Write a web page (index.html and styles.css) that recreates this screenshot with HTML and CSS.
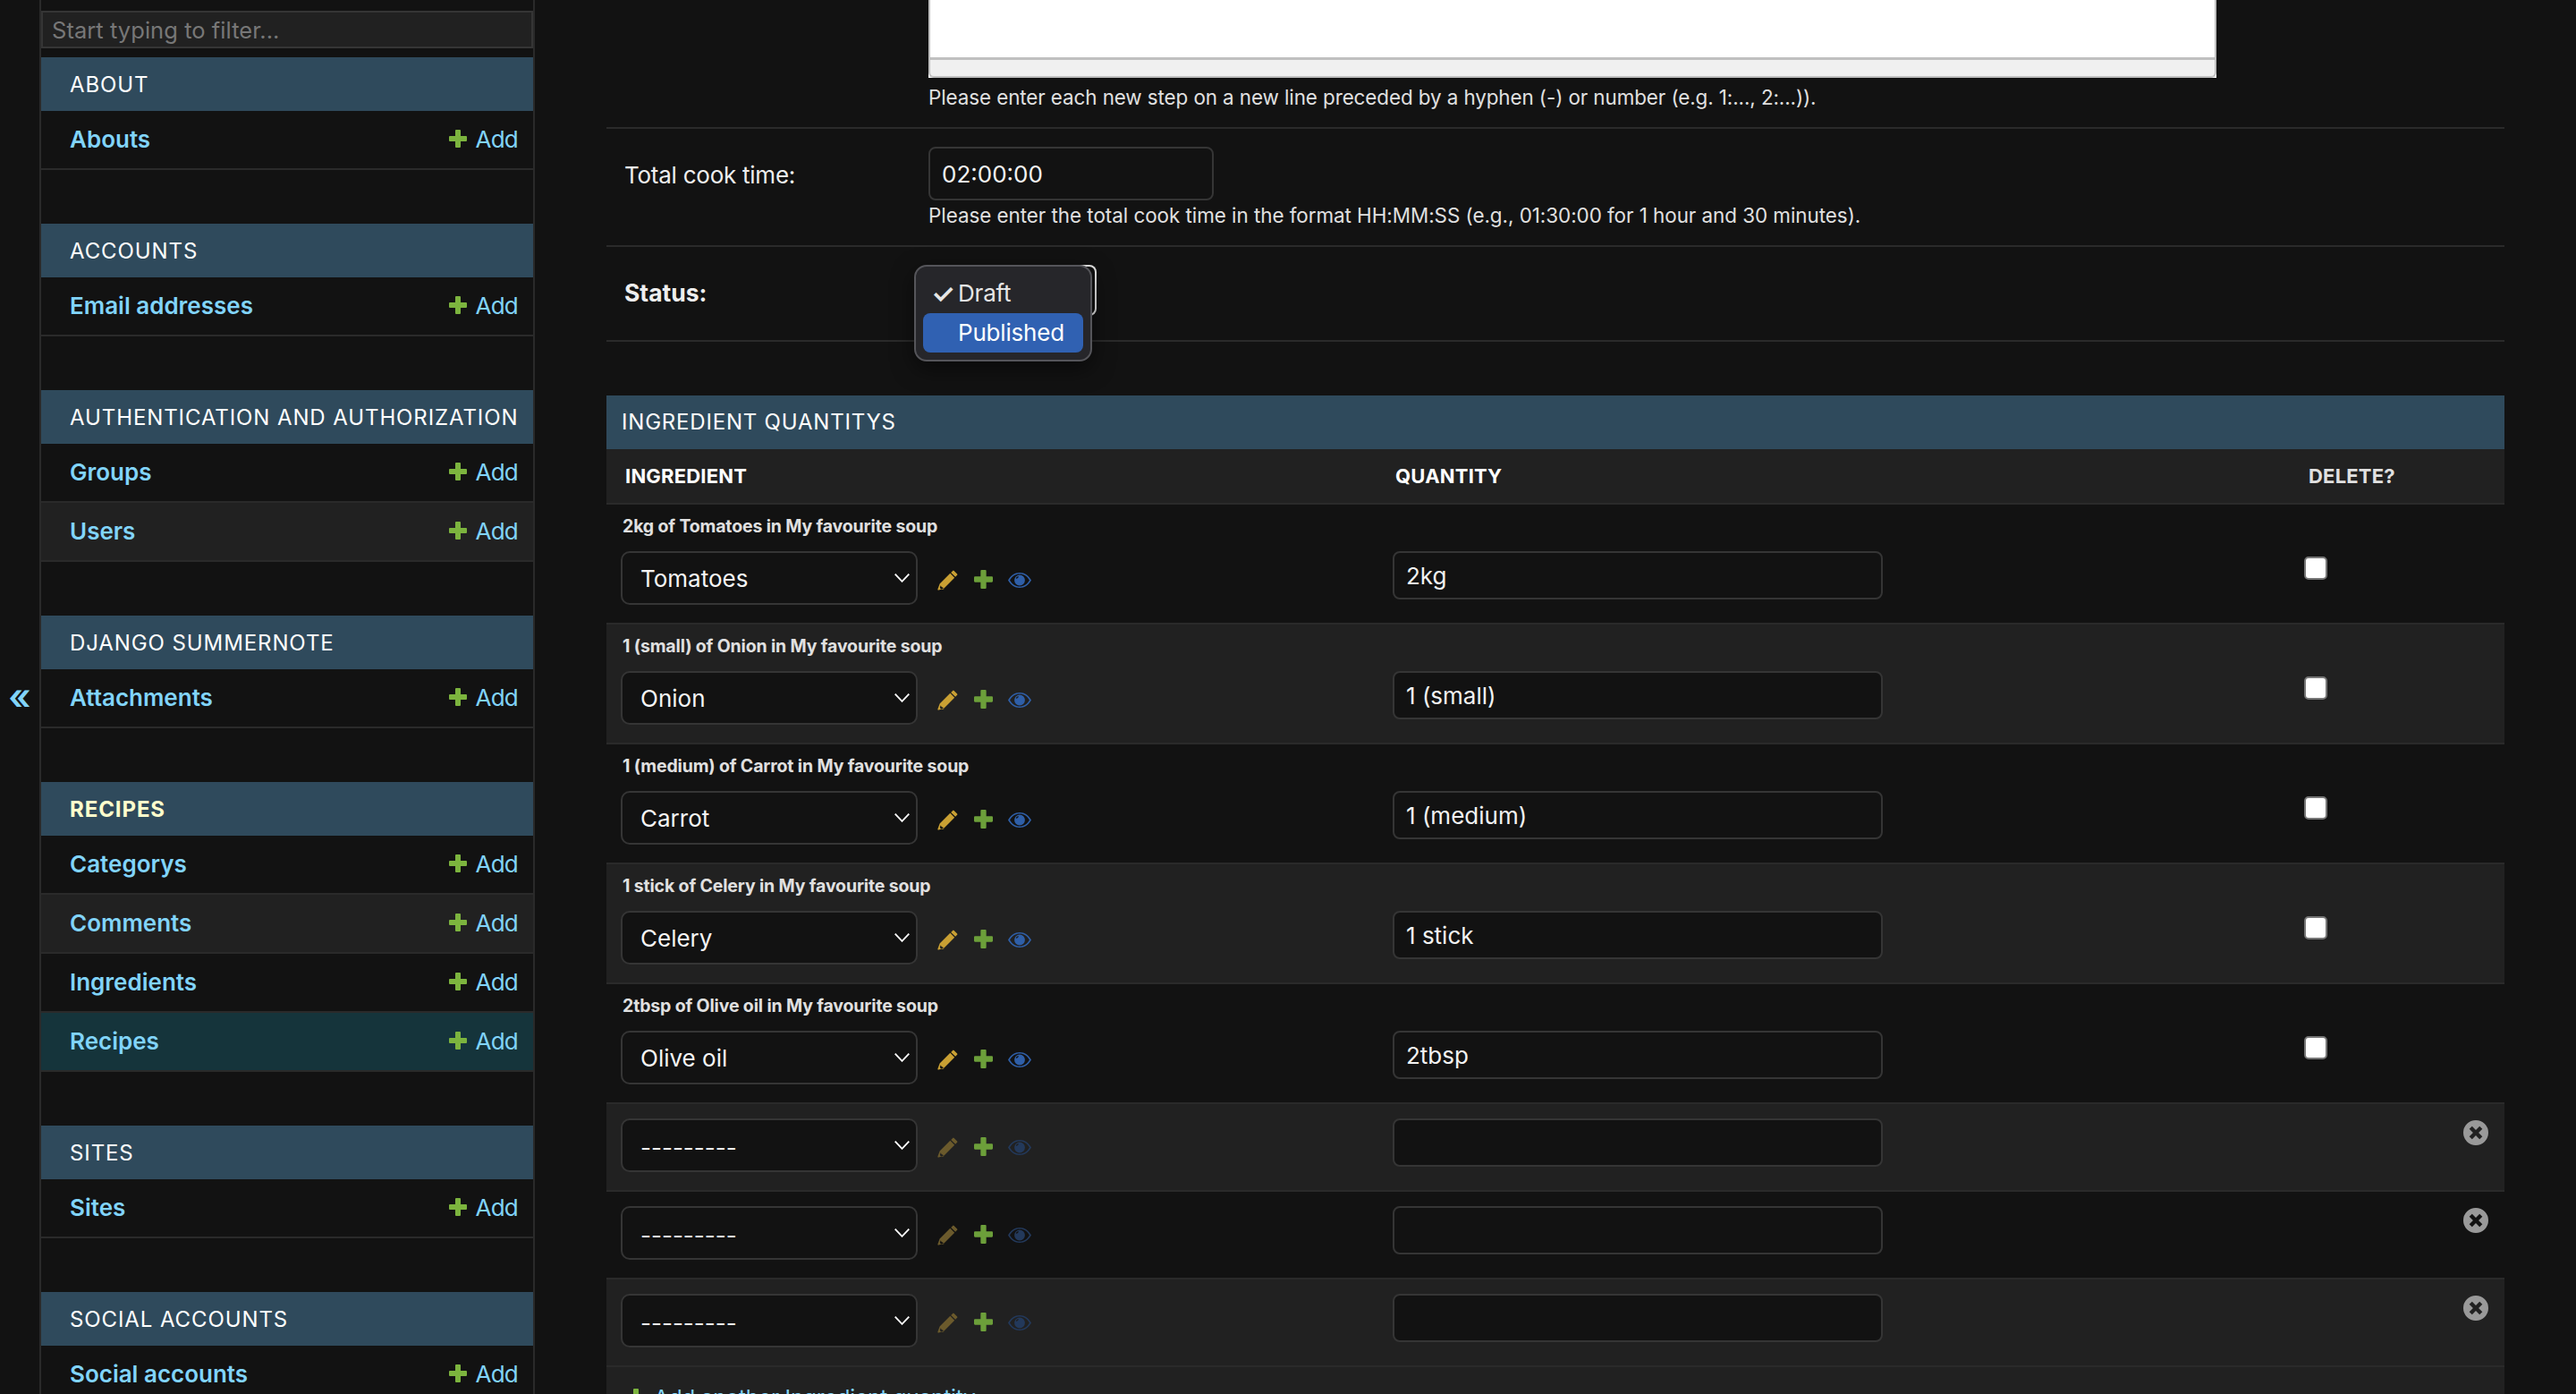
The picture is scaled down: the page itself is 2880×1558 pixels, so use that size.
FILE: index.html
```html
<!DOCTYPE html>
<html lang="en">
<head>
<meta charset="utf-8">
<title>Change recipe</title>
<link rel="stylesheet" href="styles.css">
</head>
<body>
<svg class="defs" width="0" height="0" aria-hidden="true">
  <symbol id="i-plus" viewBox="0 0 20 20"><path d="M7 1a1 1 0 0 1 1-1h4a1 1 0 0 1 1 1v6h6a1 1 0 0 1 1 1v4a1 1 0 0 1-1 1h-6v6a1 1 0 0 1-1 1H8a1 1 0 0 1-1-1v-6H1a1 1 0 0 1-1-1V8a1 1 0 0 1 1-1h6z"/></symbol>
  <symbol id="i-pencil" viewBox="0 0 23 23"><path d="M17.200.9a1 1 0 0 1 1.400 0l3.500 3.500a1 1 0 0 1 0 1.400l-2 2-4.900-4.900zM14.300 3.800l4.900 4.900L7.500 20.400 1.600 22.600.5 22.500.400 21.400 2.600 15.500zM3.700 17.200l-.9 2.900 2.100 2.100-.1-.1 2.900-.9-1.200-.2-.3-1.500-1.400-.3z"/></symbol>
  <symbol id="i-eye" viewBox="0 0 26 17"><path fill-rule="evenodd" d="M13 0c5.500 0 10.200 3.300 13 8.500C23.200 13.700 18.500 17 13 17S2.800 13.700 0 8.500C2.800 3.300 7.500 0 13 0zm0 1.500c-4.500 0-8.500 2.600-11 7 2.500 4.400 6.500 7 11 7s8.500-2.600 11-7c-2.500-4.400-6.500-7-11-7z"/><path fill-rule="evenodd" d="M13 2.600a5.900 5.900 0 1 1 0 11.800 5.900 5.900 0 0 1 0-11.800zM11.300 4.300a2.300 2.300 0 0 0-2.200 2.600c.7-.1 1.500-.6 2-1.100.5-.5.700-1 .9-1.500z"/></symbol>
  <symbol id="i-x" viewBox="0 0 28 28"><path fill-rule="evenodd" d="M14 0a14 14 0 1 1 0 28 14 14 0 0 1 0-28zM9.800 6.700 6.700 9.800 10.900 14l-4.200 4.200 3.100 3.100 4.200-4.200 4.200 4.200 3.100-3.100-4.200-4.200 4.200-4.200-3.100-3.100-4.200 4.200z"/></symbol>
  <symbol id="i-chev" viewBox="0 0 17 10"><path d="M.7.7 8.500 8.800 16.300.7" fill="none" stroke="currentColor" stroke-width="1.800"/></symbol>
</svg>
<div class="page">
  <button class="toggle" type="button">«</button>
  <nav class="sidebar">
    <input class="filter" type="text" placeholder="Start typing to filter...">
    <section class="app">
      <h2 class="caption">About</h2>
      <div class="model"><a class="name">Abouts</a><a class="add"><svg class="add-i"><use href="#i-plus"/></svg>Add</a></div>
    </section>
    <section class="app">
      <h2 class="caption">Accounts</h2>
      <div class="model"><a class="name">Email addresses</a><a class="add"><svg class="add-i"><use href="#i-plus"/></svg>Add</a></div>
    </section>
    <section class="app">
      <h2 class="caption">Authentication and Authorization</h2>
      <div class="model"><a class="name">Groups</a><a class="add"><svg class="add-i"><use href="#i-plus"/></svg>Add</a></div>
      <div class="model alt"><a class="name">Users</a><a class="add"><svg class="add-i"><use href="#i-plus"/></svg>Add</a></div>
    </section>
    <section class="app">
      <h2 class="caption">Django Summernote</h2>
      <div class="model"><a class="name">Attachments</a><a class="add"><svg class="add-i"><use href="#i-plus"/></svg>Add</a></div>
    </section>
    <section class="app">
      <h2 class="caption current">Recipes</h2>
      <div class="model"><a class="name">Categorys</a><a class="add"><svg class="add-i"><use href="#i-plus"/></svg>Add</a></div>
      <div class="model alt"><a class="name">Comments</a><a class="add"><svg class="add-i"><use href="#i-plus"/></svg>Add</a></div>
      <div class="model"><a class="name">Ingredients</a><a class="add"><svg class="add-i"><use href="#i-plus"/></svg>Add</a></div>
      <div class="model selected"><a class="name">Recipes</a><a class="add"><svg class="add-i"><use href="#i-plus"/></svg>Add</a></div>
    </section>
    <section class="app">
      <h2 class="caption">Sites</h2>
      <div class="model"><a class="name">Sites</a><a class="add"><svg class="add-i"><use href="#i-plus"/></svg>Add</a></div>
    </section>
    <section class="app">
      <h2 class="caption">Social Accounts</h2>
      <div class="model"><a class="name">Social accounts</a><a class="add"><svg class="add-i"><use href="#i-plus"/></svg>Add</a></div>
    </section>
  </nav>
  <main class="main">
    <div class="form-row first">
      <div class="editor"><div class="editor-body"></div><div class="editor-foot"></div></div>
      <p class="help">Please enter each new step on a new line preceded by a hyphen (-) or number (e.g. 1:..., 2:...)).</p>
    </div>
    <div class="form-row time">
      <label class="label">Total cook time:</label>
      <div class="field">
        <input class="input time-input" type="text" value="02:00:00">
        <p class="help">Please enter the total cook time in the format HH:MM:SS (e.g., 01:30:00 for 1 hour and 30 minutes).</p>
      </div>
    </div>
    <div class="form-row status">
      <label class="label strong">Status:</label>
      <div class="status-field">
        <div class="status-select"></div>
        <div class="popup">
          <div class="opt"><span class="tick">✓</span>Draft</div>
          <div class="opt active">Published</div>
        </div>
      </div>
    </div>

    <section class="inline">
      <h2 class="inline-caption">Ingredient Quantitys</h2>
      <div class="row head">
        <div class="c-ing th">Ingredient</div>
        <div class="c-qty th">Quantity</div>
        <div class="c-del th quiet">Delete?</div>
      </div>

      <div class="row filled">
        <div class="orig">2kg of Tomatoes in My favourite soup</div>
        <div class="c-ing"><div class="select"><span>Tomatoes</span><svg class="chev"><use href="#i-chev"/></svg></div><svg class="ic pencil"><use href="#i-pencil"/></svg><svg class="ic plus"><use href="#i-plus"/></svg><svg class="ic eye"><use href="#i-eye"/></svg></div>
        <div class="c-qty"><input class="input qty" type="text" value="2kg"></div>
        <div class="c-del"><span class="check"></span></div>
      </div>
      <div class="row filled alt">
        <div class="orig">1 (small) of Onion in My favourite soup</div>
        <div class="c-ing"><div class="select"><span>Onion</span><svg class="chev"><use href="#i-chev"/></svg></div><svg class="ic pencil"><use href="#i-pencil"/></svg><svg class="ic plus"><use href="#i-plus"/></svg><svg class="ic eye"><use href="#i-eye"/></svg></div>
        <div class="c-qty"><input class="input qty" type="text" value="1 (small)"></div>
        <div class="c-del"><span class="check"></span></div>
      </div>
      <div class="row filled">
        <div class="orig">1 (medium) of Carrot in My favourite soup</div>
        <div class="c-ing"><div class="select"><span>Carrot</span><svg class="chev"><use href="#i-chev"/></svg></div><svg class="ic pencil"><use href="#i-pencil"/></svg><svg class="ic plus"><use href="#i-plus"/></svg><svg class="ic eye"><use href="#i-eye"/></svg></div>
        <div class="c-qty"><input class="input qty" type="text" value="1 (medium)"></div>
        <div class="c-del"><span class="check"></span></div>
      </div>
      <div class="row filled alt">
        <div class="orig">1 stick of Celery in My favourite soup</div>
        <div class="c-ing"><div class="select"><span>Celery</span><svg class="chev"><use href="#i-chev"/></svg></div><svg class="ic pencil"><use href="#i-pencil"/></svg><svg class="ic plus"><use href="#i-plus"/></svg><svg class="ic eye"><use href="#i-eye"/></svg></div>
        <div class="c-qty"><input class="input qty" type="text" value="1 stick"></div>
        <div class="c-del"><span class="check"></span></div>
      </div>
      <div class="row filled">
        <div class="orig">2tbsp of Olive oil in My favourite soup</div>
        <div class="c-ing"><div class="select"><span>Olive oil</span><svg class="chev"><use href="#i-chev"/></svg></div><svg class="ic pencil"><use href="#i-pencil"/></svg><svg class="ic plus"><use href="#i-plus"/></svg><svg class="ic eye"><use href="#i-eye"/></svg></div>
        <div class="c-qty"><input class="input qty" type="text" value="2tbsp"></div>
        <div class="c-del"><span class="check"></span></div>
      </div>

      <div class="row empty alt">
        <div class="c-ing"><div class="select"><span class="dash">---------</span><svg class="chev"><use href="#i-chev"/></svg></div><svg class="ic pencil off"><use href="#i-pencil"/></svg><svg class="ic plus"><use href="#i-plus"/></svg><svg class="ic eye off"><use href="#i-eye"/></svg></div>
        <div class="c-qty"><input class="input qty" type="text"></div>
        <div class="c-del"><svg class="remove"><use href="#i-x"/></svg></div>
      </div>
      <div class="row empty">
        <div class="c-ing"><div class="select"><span class="dash">---------</span><svg class="chev"><use href="#i-chev"/></svg></div><svg class="ic pencil off"><use href="#i-pencil"/></svg><svg class="ic plus"><use href="#i-plus"/></svg><svg class="ic eye off"><use href="#i-eye"/></svg></div>
        <div class="c-qty"><input class="input qty" type="text"></div>
        <div class="c-del"><svg class="remove"><use href="#i-x"/></svg></div>
      </div>
      <div class="row empty alt">
        <div class="c-ing"><div class="select"><span class="dash">---------</span><svg class="chev"><use href="#i-chev"/></svg></div><svg class="ic pencil off"><use href="#i-pencil"/></svg><svg class="ic plus"><use href="#i-plus"/></svg><svg class="ic eye off"><use href="#i-eye"/></svg></div>
        <div class="c-qty"><input class="input qty" type="text"></div>
        <div class="c-del"><svg class="remove"><use href="#i-x"/></svg></div>
      </div>

      <div class="add-row"><svg class="add-i"><use href="#i-plus"/></svg><a class="add-link">Add another Ingredient quantity</a></div>
    </section>
  </main>
</div>
</body>
</html>
```
FILE: styles.css
```css
* { box-sizing: border-box; }
html, body { margin: 0; height: 1558px; overflow: hidden; background: #121212; }
body { font-family: Inter, "Noto Sans", "Liberation Sans", sans-serif; color: #eeeeee; font-size: 26px; }
.defs { position: absolute; }
h2, p { margin: 0; font-weight: 400; }
a { color: #81d4fa; }

.page { display: flex; height: 1558px; align-items: flex-start; }

.toggle { width: 44px; height: 1558px; flex: none; padding: 0; border: 0; background: transparent; color: #81d4fa; font: 600 40px/1 Inter, sans-serif; }

.sidebar { width: 554px; height: 1558px; flex: none; padding-top: 12px; border-left: 2px solid #2a2a2a; border-right: 2px solid #2a2a2a; background: #121212; overflow: hidden; }
.filter { display: block; width: 100%; height: 42px; margin-bottom: 10px; padding: 0 10px; border: 2px solid #353535; background: #212121; color: #eee; font: 400 25.5px Inter, sans-serif; letter-spacing: .05px; }
.filter::placeholder { color: #777; opacity: 1; }

.app { margin-bottom: 60px; }
.caption { height: 60px; padding: 0 32px; background: #2f4a5c; color: #fff; font-size: 24px; line-height: 61px; letter-spacing: .9px; text-transform: uppercase; white-space: nowrap; }
.caption.current { color: #ffffcc; font-weight: 700; }
.model { display: flex; justify-content: space-between; align-items: center; height: 66px; padding: 0 17px 2px 32px; border-bottom: 2px solid #2a2a2a; }
.model.alt { background: #212121; }
.model.selected { background: #15343b; }
.name { font-weight: 600; font-size: 26px; }
.add { display: flex; align-items: center; font-size: 26px; letter-spacing: -.8px; }
.add-i { width: 20px; height: 20px; margin-right: 10px; fill: #7cb43e; }

.main { flex: none; width: 2122px; margin-left: 80px; }
.form-row { border-bottom: 2px solid #2a2a2a; }
.first { height: 144px; padding-left: 360px; }
.editor { width: 1440px; height: 87px; background: #fff; }
.editor-body { height: 67px; border-right: 2px solid #c0c0c0; border-bottom: 3px solid #c0c0c0; background: #fff; border-left: 2px solid #c0c0c0; }
.editor-foot { height: 20px; background: #f0f0f0; border: 2px solid #c0c0c0; border-top: 0; border-radius: 0 0 6px 6px; }
.help { margin-top: 8px; font-size: 22.4px; line-height: 28px; color: #e0e0e0; letter-spacing: -.08px; white-space: nowrap; }

.time { display: flex; height: 132px; padding-top: 20px; }
.label { display: block; flex: none; width: 360px; padding: 16px 0 0 20px; font-size: 26px; line-height: 32px; color: #eee; letter-spacing: -.25px; }
.strong { font-weight: 700; font-size: 26.5px; letter-spacing: 0; }
.field { flex: none; }
.input { display: block; border: 2px solid #353535; border-radius: 8px; background: #121212; color: #f2f2f2; font: 400 26px Inter, sans-serif; padding: 0 13px; outline: 0; }
.time-input { width: 319px; height: 60px; }
.time .help { margin-top: 3px; letter-spacing: -.03px; }

.status { display: flex; height: 106px; padding-top: 20px; }
.status .label { padding-top: 15px; }
.status-field { position: relative; }
.status-select { width: 188px; height: 57px; border: 2px solid #e8e8e8; border-left: 0; border-radius: 8px; }
.popup { position: absolute; left: -16px; top: 0; width: 199px; height: 108px; padding: 8px 8px 0; border: 2px solid #55555a; border-radius: 14px; background: #26262a; box-shadow: 0 8px 24px rgba(0,0,0,.5); }
.opt { position: relative; height: 44px; padding-left: 39px; font-size: 26px; line-height: 44px; color: #e6e6e6; letter-spacing: -.2px; }
.opt.active { background: #3061b2; color: #fff; border-radius: 8px; }
.tick { position: absolute; left: 9px; top: 0; font-size: 30px; font-weight: 600; }

.inline { margin-top: 60px; }
.inline-caption { height: 60px; padding-left: 17px; background: #2f4a5c; color: #fff; font-size: 24px; line-height: 60px; letter-spacing: .8px; text-transform: uppercase; }
.row { display: flex; position: relative; border-bottom: 2px solid #2a2a2a; }
.row.alt { background: #212121; }
.head { height: 62px; background: #212121; align-items: center; }
.th { font-size: 22px; font-weight: 700; text-transform: uppercase; color: #fff; letter-spacing: .2px; }
.head .c-ing { padding-left: 21px; }
.head .c-qty { padding-left: 3px; }
.head .c-del { padding-left: 5px; }
.quiet { color: #e0e0e0; }
.c-ing { flex: none; width: 879px; padding-left: 16px; display: flex; align-items: flex-start; }
.c-qty { flex: none; width: 1019px; }
.c-del { flex: none; width: 224px; }

.filled { height: 134px; padding-top: 52px; }
.empty { height: 98px; padding-top: 16px; }
.orig { position: absolute; left: 18px; top: 12px; font-size: 19.5px; line-height: 24px; font-weight: 700; color: #e0e0e0; letter-spacing: -.15px; }

.select { display: flex; justify-content: space-between; align-items: center; width: 332px; height: 60px; padding: 0 7px 0 20px; border: 2px solid #353535; border-radius: 10px; background: #121212; color: #f5f5f5; font-size: 26px; }
.select span { position: relative; }
.dash { letter-spacing: 0; top: 2px; }
.chev { width: 17px; height: 10px; color: #fff; }
.ic { flex: none; }
.pencil { width: 23px; height: 23px; margin-left: 22px; margin-top: 21px; fill: #c9a033; }
.plus { width: 21px; height: 21px; margin-left: 18px; margin-top: 21px; fill: #6c9f3a; }
.eye { width: 26px; height: 17px; margin-left: 17px; margin-top: 24px; fill: #2f5fa8; }
.pencil.off { fill: #6b5a2c; }
.eye.off { fill: #23395b; }

.qty { width: 548px; height: 54px; }
.check { display: block; width: 26px; height: 26px; margin: 6px 0 0 0; border: 2px solid #767676; border-radius: 5px; background: #fff; }
.remove { display: block; width: 28px; height: 28px; margin: 2px 0 0 178px; fill: #999; }

.add-row { display: flex; align-items: center; height: 68px; padding: 0 0 0 23px; background: #212121; }
.add-row .add-i { margin-right: 10px; fill: #7cb43e; }
.add-link { font-size: 24.4px; letter-spacing: -.2px; }
```
